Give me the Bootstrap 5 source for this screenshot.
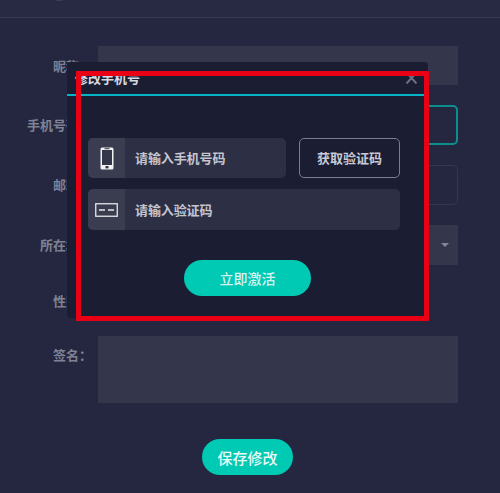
<!DOCTYPE html>
<html lang="zh"><head><meta charset="utf-8"><title>修改手机号</title>
<link href="https://cdn.jsdelivr.net/npm/bootstrap@5.3.0/dist/css/bootstrap.min.css" rel="stylesheet">
<style>
html,body{height:100%;overflow:hidden}
body{background:#24273f;font-family:"Noto Sans CJK SC","Liberation Sans",sans-serif;position:relative;width:500px;height:493px}
.topstrip{height:18px;background:#272a42;border-bottom:1px solid #383b50;position:relative;overflow:hidden}
.avatarbit{position:absolute;left:46px;top:-27px;width:26px;height:28px;border-radius:50%;background:#3e4156}
.formarea{padding:28px 42px 0 0}
.frow{margin-bottom:20px;height:40px}
.frow.first{height:39px}
.frow.gender{height:31px}
.frow.sign{height:67px;margin-bottom:36px;align-items:flex-start!important}
.flabel{width:98px;flex:none;padding-right:6px;text-align:right;font-size:13px;font-weight:700;color:#7f8195}
.frow.sign .flabel{padding-top:9px}
.fbox{flex:1;height:100%;background:#34374c}
.fbox.hollow{background:transparent;border:1px solid #33364c;border-radius:5px}
.fbox.active{background:transparent;border:2px solid #0c8f8c;border-radius:5px}
.fcaret{width:0;height:0;border-left:4px solid transparent;border-right:4px solid transparent;border-top:4px solid #85869a;margin-right:9px}
.tealbtn{background:#00c9b4;color:#d8f2ee;border:0;border-radius:18px;font-weight:500;line-height:1;padding:0}
.savebtn{width:91px;height:36px;font-size:15px;color:#eafaf7}
.savewrap{padding-left:202px}
.dlg{position:absolute;left:67px;top:62px;width:361px;height:256px;background:#1b1d33;border-radius:3px}
.dlghead{height:34px;border-bottom:2px solid #05b3c8;padding:6px 11px 0 8px;color:#d9dae0;font-size:13px;font-weight:700;line-height:20px}
.dlgx{display:block;line-height:0;margin-top:4px}
.dlgbody{padding:42px 28px 0 21px}
.phonerow{margin-bottom:11px}
.fieldline{height:40px;background:#2d2f45;border-radius:5px;overflow:hidden}
.fieldicon{width:37px;background:#3a3c50;flex:none}
.fieldtext{padding-left:10px;font-size:13px;font-weight:700;color:#c4c5cf;letter-spacing:-.1px}
.getcode{width:101px;height:40px;flex:none;background:transparent;border:1px solid #7b7d8e;border-radius:5px;color:#c9cad3;font-size:13px;font-weight:700;padding:0}
.activate{width:127px;height:36px;font-size:14px}
.activewrap{margin-top:30px;padding-left:96px}
.redmark{position:absolute;left:76px;top:71px;width:353px;height:250px;border:5px solid #ea0014;pointer-events:none}
</style></head>
<body>
<div class="topstrip"><div class="avatarbit"></div></div>
<div class="formarea">
  <div class="frow first d-flex align-items-center"><div class="flabel">昵称：</div><div class="fbox"></div></div>
  <div class="frow d-flex align-items-center"><div class="flabel">手机号码：</div><div class="fbox active"></div></div>
  <div class="frow d-flex align-items-center"><div class="flabel">邮箱：</div><div class="fbox hollow"></div></div>
  <div class="frow d-flex align-items-center"><div class="flabel">所在地：</div><div class="fbox d-flex align-items-center justify-content-end"><span class="fcaret"></span></div></div>
  <div class="frow gender d-flex align-items-center"><div class="flabel">性别：</div></div>
  <div class="frow sign d-flex"><div class="flabel">签名：</div><div class="fbox"></div></div>
  <div class="savewrap"><button type="button" class="btn tealbtn savebtn">保存修改</button></div>
</div>

<div class="dlg">
  <div class="dlghead d-flex justify-content-between"><span>修改手机号</span><span class="dlgx"><svg width="11" height="12" viewBox="0 0 11 12"><path d="M.5 .5 10.5 11.5M10.5 .5 .5 11.5" stroke="#6d6f82" stroke-width="2" fill="none"/></svg></span></div>
  <div class="dlgbody">
    <div class="phonerow d-flex justify-content-between">
      <div class="fieldline d-flex" style="width:198px">
        <div class="fieldicon d-flex align-items-center justify-content-center">
          <svg width="14" height="23" viewBox="0 0 14 23"><rect x=".5" y=".5" width="13" height="22" rx="1.5" fill="#f2f2f4"/><rect x="2" y="3" width="10" height="15" fill="#34364a"/><rect x="5.5" y="19" width="3" height="2.4" fill="#34364a"/><rect x="4.5" y="1.2" width="5" height="1" fill="#34364a"/></svg>
        </div>
        <div class="fieldtext d-flex align-items-center">请输入手机号码</div>
      </div>
      <button type="button" class="getcode">获取验证码</button>
    </div>
    <div class="fieldline d-flex" style="height:41px;width:312px">
      <div class="fieldicon d-flex align-items-center justify-content-center">
        <svg width="23" height="14" viewBox="0 0 23 14"><rect x=".75" y=".75" width="21.5" height="12.5" fill="none" stroke="#e6e6ea" stroke-width="1.3"/><path d="M4 7h6M13 7h6" stroke="#e6e6ea" stroke-width="1.3"/></svg>
      </div>
      <div class="fieldtext d-flex align-items-center">请输入验证码</div>
    </div>
    <div class="activewrap">
      <button type="button" class="btn tealbtn activate">立即激活</button>
    </div>
  </div>
</div>
<div class="redmark"></div>
</body></html>
